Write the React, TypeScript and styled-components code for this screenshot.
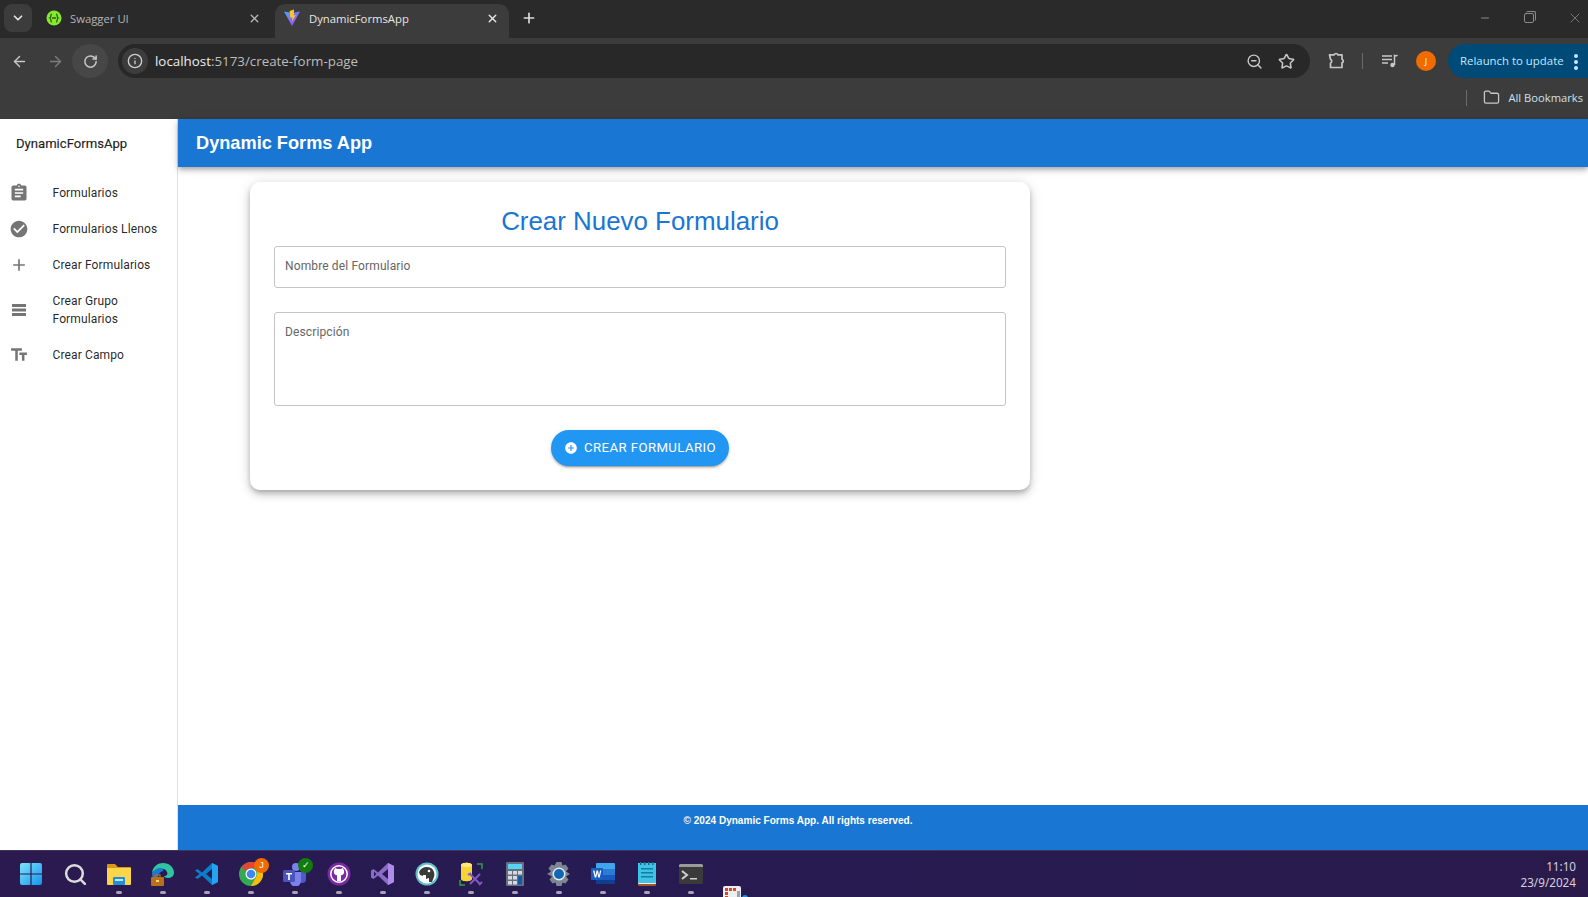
import React from "react";
import styled, { createGlobalStyle } from "styled-components";
import { ArrowLeft, ArrowRight, RotateCw, Info, ZoomOut, Star, Folder, X, Plus, ChevronDown, Minus, Search } from "lucide-react";
import { MdAssignment, MdCheckCircle, MdAdd, MdTextFields, MdAddCircle } from "react-icons/md";

const Global = createGlobalStyle`
  html, body { margin: 0; padding: 0; height: 100%; overflow: hidden; background: #fff; }
  * { box-sizing: border-box; }
  #root { height: 897px; width: 1588px; display: flex; flex-direction: column; font-family: Roboto, "Liberation Sans", sans-serif; }
`;

const Browser = styled.header`
  height: 119px; flex: none; background: #3c3c3c; display: flex; flex-direction: column;
  font-family: "Open Sans", "Noto Sans", sans-serif; color: #e3e3e3;
`;
const TabStrip = styled.div`
  height: 38px; background: #2a2a2a; display: flex; align-items: flex-start; padding: 4px 0 0 4px; position: relative;
`;
const TabSearch = styled.div`
  width: 28px; height: 28px; border-radius: 8px; background: #3c3c3c; display: flex; align-items: center; justify-content: center; margin-right: 6px;
`;
const Tab = styled.div<{ $active?: boolean }>`
  width: ${(p) => (p.$active ? 234 : 237)}px; height: 34px; display: flex; align-items: center; padding: 0 ${(p) => (p.$active ? 10 : 14)}px 6px 8px; border-radius: 10px 10px 0 0;
  background: ${(p) => (p.$active ? "#3c3c3c" : "transparent")};
  color: ${(p) => (p.$active ? "#e6e6e6" : "#b5b5b5")};
  font-size: 11.3px; gap: 8px;
`;
const TabTitle = styled.span`flex: 1;`;
const NewTab = styled.div`width: 39px; height: 28px; display: flex; align-items: center; justify-content: center; color: #dcdcdc;`;
const WindowButtons = styled.div`
  margin-left: auto; display: flex; height: 28px; align-items: center; padding-right: 5px; gap: 32px; color: #8a8a8a;
`;
const Restore = styled.div`
  width: 10px; height: 10px; border: 1px solid #8a8a8a; border-radius: 2px; position: relative; margin: 0 1px;
  &::after { content: ""; position: absolute; top: -3px; right: -3px; width: 9px; height: 9px; border-top: 1px solid #8a8a8a; border-right: 1px solid #8a8a8a; border-radius: 2px; }
`;
const Toolbar = styled.div`height: 44px; display: flex; align-items: center; padding: 2px 0 0 0;`;
const NavButton = styled.div<{ $w: number; $circle?: boolean; $dim?: boolean }>`
  width: ${(p) => p.$w}px; height: 34px; display: flex; align-items: center; justify-content: center; flex: none;
  border-radius: 50%; background: ${(p) => (p.$circle ? "#474747" : "transparent")};
  color: ${(p) => (p.$dim ? "#7c7c7c" : "#c7c7c7")};
`;
const Omnibox = styled.div`
  width: 1192px; height: 34px; border-radius: 17px; background: #282828; margin-left: 10px; display: flex; align-items: center; padding: 0 15px 0 4px; flex: none;
`;
const InfoChip = styled.div`width: 26px; height: 26px; border-radius: 50%; background: #3c3c3c; display: flex; align-items: center; justify-content: center; color: #d0d0d0; margin-right: 7px;`;
const Url = styled.span`font-size: 13.35px; color: #bdbdbd; flex: 1; b { font-weight: 400; color: #ededed; }`;
const OmniIcons = styled.div`display: flex; gap: 15px; color: #c7c7c7; align-items: center;`;
const ToolIcons = styled.div`display: flex; align-items: center; color: #c7c7c7; margin-left: 17px; flex: 1;`;
const ToolSlot = styled.span<{ $gap: number }>`display: flex; margin-left: ${(p) => p.$gap}px;`;
const VSep = styled.div<{ $gap?: number }>`width: 1px; height: 16px; background: #6a6a6a; flex: none; margin-left: ${(p) => p.$gap ?? 0}px;`;
const Avatar = styled.div`
  width: 20px; height: 20px; border-radius: 50%; background: #f06c00; color: #fff; font-size: 9px; display: flex; align-items: center; justify-content: center; flex: none;
`;
const Relaunch = styled.div`
  margin-left: auto; width: 140px; height: 34px; background: #004a77; color: #c2e7ff; border-radius: 17px 0 0 17px; display: flex; align-items: center; padding: 0 0 2px 12px; font-size: 11.4px; position: relative; white-space: nowrap;
`;
const Dots = styled.span`
  position: absolute; right: 10px; top: 10px; width: 4px; height: 4px; background: #c2e7ff; border-radius: 50%; box-shadow: 0 6px 0 #c2e7ff, 0 12px 0 #c2e7ff;
`;
const BookmarkBar = styled.div`
  height: 37px; display: flex; align-items: center; justify-content: flex-end; padding: 0 5px 6px 0; font-size: 11.2px; color: #cfe0ea;
`;
const BookmarkFolder = styled.span`display: flex; color: #c7c7c7; margin: 0 8px 0 16px;`;

const Page = styled.div`flex: 1; min-height: 0; display: flex;`;
const Sidebar = styled.aside`width: 178px; flex: none; border-right: 1px solid #e0e0e0; background: #fff; display: flex; flex-direction: column;`;
const Brand = styled.div`height: 48px; padding: 1px 0 0 16px; display: flex; align-items: center; font-size: 13.1px; font-weight: 400; -webkit-text-stroke: .2px rgba(0,0,0,.87); color: rgba(0,0,0,.87);`;
const NavList = styled.nav`padding-top: 8px; display: flex; flex-direction: column;`;
const NavItem = styled.div`display: flex; align-items: center; padding: 9px 14px 9px 9px; font-size: 12px; line-height: 18px; color: rgba(0,0,0,.87); letter-spacing: .13px;`;
const NavIcon = styled.span`width: 43.5px; height: 18px; flex: none; display: flex; align-items: center; color: #757575;`;

const Main = styled.div`flex: 1; min-width: 0; display: flex; flex-direction: column;`;
const AppBar = styled.div`
  height: 48px; flex: none; background: #1976d2; color: #fff; display: flex; align-items: center; padding-left: 18px;
  font: bold 18.2px "Liberation Sans", sans-serif; box-shadow: 0 2px 4px -1px rgba(0,0,0,.2), 0 4px 5px rgba(0,0,0,.14), 0 1px 10px rgba(0,0,0,.12); position: relative; z-index: 1;
`;
const Content = styled.main`flex: 1; padding: 15px 0 0 72px;`;
const Card = styled.section`
  width: 780px; height: 308px; background: #fff; border-radius: 10px; padding: 22px 24px 20px; display: flex; flex-direction: column;
  box-shadow: 0 3px 5px -1px rgba(0,0,0,.2), 0 5px 8px rgba(0,0,0,.14), 0 1px 14px rgba(0,0,0,.12);
`;
const Title = styled.h1`margin: 0 0 8px; height: 34px; font: 400 25.9px/34px "Liberation Sans", sans-serif; color: #1976d2; text-align: center;`;
const Field = styled.input`
  height: 42px; border: 1px solid #c4c4c4; border-radius: 3px; padding: 0 10px 2px; font: 12px Roboto, sans-serif; letter-spacing: .13px; margin-bottom: 24px; outline: none;
  &::placeholder { color: #666; opacity: 1; }
`;
const Area = styled.textarea`
  height: 94px; border: 1px solid #c4c4c4; border-radius: 3px; padding: 12px 10px; font: 12px/15px Roboto, sans-serif; letter-spacing: .13px; margin-bottom: 24px; outline: none; resize: none;
  &::placeholder { color: #666; opacity: 1; }
`;
const Submit = styled.button`
  align-self: center; width: 178px; height: 36px; border: 0; border-radius: 18px; background: #2196f3; color: #fff; display: flex; align-items: center; justify-content: center; gap: 6px; padding: 0 0 1px;
  font: 400 13.2px Roboto, sans-serif; letter-spacing: .42px; text-transform: uppercase; box-shadow: 0 3px 1px -2px rgba(0,0,0,.2), 0 2px 2px rgba(0,0,0,.14), 0 1px 5px rgba(0,0,0,.12);
`;
const Footer = styled.footer`
  height: 45px; flex: none; background: #1976d2; color: #fff; font: bold 10.05px "Liberation Sans", sans-serif; text-align: center; padding: 9px 170px 0 0; line-height: 14px;
`;

const Taskbar = styled.div`
  height: 47px; flex: none; background: linear-gradient(90deg, #2b1a50, #261b52 35%, #2a1a4c); border-top: 1px solid #3d3460; display: flex; align-items: flex-start; padding-left: 9px; position: relative; overflow: hidden;
`;
const Slot = styled.div<{ $dot?: boolean }>`
  width: 44px; height: 46px; display: flex; justify-content: center; padding-top: 11px; position: relative; flex: none;
  ${(p) => p.$dot ? `&::after { content: ""; position: absolute; left: 19px; bottom: 3px; width: 6px; height: 3px; border-radius: 2px; background: #a7a3b5; }` : ""}
`;
const Overflow = styled.div`position: absolute; left: 722px; top: 34px; display: flex;`;
const Clock = styled.div`
  position: absolute; right: 12px; top: 7px; color: #d5d0de; font: 11.7px/16px "Noto Sans", sans-serif; text-align: right;
`;
const Badge = styled.span<{ $bg: string }>`
  position: absolute; top: 7px; right: 4px; width: 15px; height: 15px; border-radius: 50%; background: ${(p) => p.$bg}; color: #fff; font-size: 9px; line-height: 15px; text-align: center; font-family: "Liberation Sans", sans-serif;
`;

const SwaggerIcon = () => (
  <svg width="16" height="16" viewBox="0 0 16 16"><circle cx="8" cy="8" r="7.500" fill="#85ea2d" /><path d="M5.800 3.800C4 4.500 5.800 7 3.800 8c2 1 .2 3.500 2 4.200M10.200 3.800C12 4.500 10.200 7 12.200 8c-2 1-.2 3.500-2 4.200M6 8h4" stroke="#2c5c12" strokeWidth="1.300" fill="none" /></svg>
);
const ViteIcon = () => (
  <svg width="18" height="18" viewBox="0 0 18 18"><defs><linearGradient id="v" x1="0" y1="0" x2="1" y2="1"><stop offset="0" stopColor="#41a8ff" /><stop offset="1" stopColor="#bd34fe" /></linearGradient></defs><path d="M1 2.500 9 4l8-1.500L9 17z" fill="url(#v)" /><path d="M11 .5 6.500 2l1 7 2-.8-.4 4.300L12.800 6l-2 .5z" fill="#ffc61f" /></svg>
);
const BarsIcon = () => (
  <svg width="20" height="20" viewBox="0 0 20 20" fill="currentColor"><path d="M3 4h14v3H3zM3 8.500h14v3H3zM3 13h14v3H3z" /></svg>
);
const ExtensionIcon = () => (
  <svg width="18" height="18" viewBox="0 0 18 18" fill="none" stroke="currentColor" strokeWidth="1.700" strokeLinejoin="round"><path d="M2.500 2.800H7.200a1.900 1.900 0 0 1 3.600 0H15v4.400a1.900 1.900 0 0 1 0 3.600V15.500H3.500v-4.300a2.200 2.200 0 0 0 0-3.900z" /></svg>
);
const MediaIcon = () => (
  <svg width="18" height="18" viewBox="0 0 18 18" fill="none" stroke="currentColor" strokeWidth="1.500"><path d="M1 4h10M1 7.500h10M1 11h6" /><path d="M13.500 13V3.500c1 .6 2 .4 3-.4" /><circle cx="11.500" cy="13" r="2.200" fill="currentColor" stroke="none" /></svg>
);

const Win = () => (
  <svg width="24" height="24" viewBox="0 0 24 24"><defs><linearGradient id="w" x1="0" y1="0" x2="1" y2="1"><stop offset="0" stopColor="#7fe3fb" /><stop offset="1" stopColor="#1493ee" /></linearGradient></defs><path d="M1 3a2 2 0 0 1 2-2h8.400v10.400H1zM12.600 1H21a2 2 0 0 1 2 2v8.400H12.600zM1 12.600h10.400V23H3a2 2 0 0 1-2-2zM12.600 12.600H23V21a2 2 0 0 1-2 2h-8.400z" fill="url(#w)" /></svg>
);
const FilesIcon = () => (
  <svg width="24" height="24" viewBox="0 0 24 24"><path d="M0 3a1 1 0 0 1 1-1h7l3 3h12a1 1 0 0 1 1 1v3H0z" fill="#d99a13" /><path d="M0 6h24v16a1 1 0 0 1-1 1H1a1 1 0 0 1-1-1z" fill="#fcd54a" /><rect x="6" y="15" width="12" height="8" fill="#1f8fd8" rx="1" /><rect x="8" y="17" width="8" height="2" fill="#bfe6fb" /></svg>
);
const EdgeIcon = () => (
  <svg width="24" height="24" viewBox="0 0 24 24"><path d="M1 11C2 4 7 1 12 1c6 0 11 4 11 10 0 3-3 5-6 5-2 0-4-1-4-2 3 0 4-2 3-4-1-3-4-4-7-3-3 0-6 2-8 4z" fill="#2fc5a0" /><path d="M1 11c2-3 5-5 8-5 3 0 4 2 3 3-3 1-5 3-5 7 0 2 1 5 4 7C5 23 1 18 1 11z" fill="#1a78d6" /><rect x="0" y="15" width="13" height="9" rx="1" fill="#b8701a" /><rect x="4" y="13" width="5" height="3" fill="none" stroke="#b8701a" strokeWidth="1.200" /><rect x="5" y="18" width="3" height="2" fill="#ffd27a" /></svg>
);
const VSCodeIcon = () => (
  <svg width="24" height="24" viewBox="0 0 24 24"><path d="M17 1 23 4v16l-6 3L7 13.500 2.500 17 0 15.500 4.500 12 0 8.500 2.500 7 7 10.500z" fill="#0a7ecb" /><path d="M17 1 23 4v16l-6 3z" fill="#25a4ee" /><path d="M17 7v10l-6-5z" fill="#261b52" /></svg>
);
const ChromeIcon = () => (
  <svg width="24" height="24" viewBox="0 0 24 24"><circle cx="12" cy="12" r="12" fill="#34a853" /><path d="M12 0a12 12 0 0 1 10.400 6H12a6 6 0 0 0-5.200 3L2.600 5.400A12 12 0 0 1 12 0z" fill="#ea4335" /><path d="M22.400 6A12 12 0 0 1 12 24l5.200-9A6 6 0 0 0 17 8z" fill="#fbbc04" /><circle cx="12" cy="12" r="5.500" fill="#fff" /><circle cx="12" cy="12" r="4.300" fill="#4285f4" /></svg>
);
const TeamsIcon = () => (
  <svg width="24" height="24" viewBox="0 0 24 24"><circle cx="13" cy="5" r="4" fill="#7b83eb" /><circle cx="20" cy="7" r="3" fill="#5059c9" /><path d="M15 10h8v7a4 4 0 0 1-8 0z" fill="#5059c9" /><path d="M7 10h11v9a5 5 0 0 1-11 0z" fill="#7b83eb" /><rect x="0" y="8" width="12" height="12" rx="1.500" fill="#4b53bc" /><path d="M3 11h6v1.500H6.800V18H5.200v-5.500H3z" fill="#fff" /></svg>
);
const GithubIcon = () => (
  <svg width="24" height="24" viewBox="0 0 24 24"><circle cx="12" cy="12" r="11.500" fill="#7b2aa5" /><circle cx="12" cy="12" r="8.200" fill="none" stroke="#fff" strokeWidth="1.500" /><path d="M7.500 7.500 8 6l2.500 1h3L16 6l.5 1.500c1 1.500 1 4-.5 5-1 .7-2 .8-2.200.8l.2 1V19h-4v-4.700l.2-1c-.2 0-1.200-.1-2.200-.8-1.500-1-1.500-3.500-.5-5z" fill="#fff" /></svg>
);
const VSIcon = () => (
  <svg width="24" height="24" viewBox="0 0 24 24"><path d="M17 1 23 4v16l-6 3L7 13.500 2.500 17 0 15.500v-7L2.500 7 7 10.500z" fill="#8a6cc6" /><path d="M17 1 23 4v16l-6 3z" fill="#b18be8" /><path d="M17 7v10l-6-5z" fill="#261b52" /><path d="M3 9.500v5l2.500-2.500z" fill="#261b52" /></svg>
);
const DBeaverIcon = () => (
  <svg width="24" height="24" viewBox="0 0 24 24"><circle cx="12" cy="12" r="11.500" fill="#5fbfc4" /><circle cx="12" cy="12" r="9.500" fill="#fff" /><path d="M4 10c2-5 8-6 12-4 3 2 4 6 3 9l-2 5h-3v-4l-3 1-3-3-3-1z" fill="#3a3a3a" /><circle cx="14" cy="9" r="1.300" fill="#fff" /><rect x="8" y="13" width="3" height="4" fill="#fff" /></svg>
);
const SqlToolIcon = () => (
  <svg width="24" height="24" viewBox="0 0 24 24"><path d="M2 3c0-3 11-3 11 0v14c0 3-11 3-11 0z" fill="#f6d437" /><ellipse cx="7.500" cy="3" rx="5.500" ry="2.200" fill="#ffe97a" /><path d="M18 2h5v5M1 18v5h5" fill="none" stroke="#2f9e44" strokeWidth="1.500" /><path d="M11 12l10 10M21 12 11 22M9 13l3-2M23 20l-3 3" stroke="#8456c8" strokeWidth="2" /></svg>
);
const CalcIcon = () => (
  <svg width="24" height="24" viewBox="0 0 24 24"><rect x="3" y="0" width="18" height="24" rx="1" fill="#66707e" /><rect x="5" y="2" width="14" height="5" fill="#57d4f2" /><path d="M5 9h4v3.500H5zM10 9h4v3.500h-4zM5 14h4v3.500H5zM10 14h4v3.500h-4zM5 19h4v3.500H5zM10 19h4v3.500h-4z" fill="#d6dae0" /><rect x="15" y="14" width="4" height="8.500" fill="#0e5aa6" /><rect x="15" y="9" width="4" height="3.500" fill="#d6dae0" /></svg>
);
const GearIcon = () => (
  <svg width="24" height="24" viewBox="0 0 24 24"><path d="M9.500 0h5l1 3.500 3-1 3 4-2.500 3 4 2.500-4 2.500 2.500 3-3 4-3-1-1 3.500h-5l-1-3.500-3 1-3-4 2.500-3L0 12l4-2.500-2.500-3 3-4 3 1z" fill="#7d8794" /><circle cx="12" cy="12" r="6.500" fill="#e7eaee" /><circle cx="12" cy="12" r="5" fill="#0f67b5" /></svg>
);
const WordIcon = () => (
  <svg width="24" height="24" viewBox="0 0 24 24"><path d="M6 1h17a1 1 0 0 1 1 1v5H5V2a1 1 0 0 1 1-1z" fill="#41a5ee" /><rect x="5" y="7" width="19" height="6" fill="#2b7cd3" /><rect x="5" y="13" width="19" height="5" fill="#185abd" /><path d="M5 18h19v3a1 1 0 0 1-1 1H6a1 1 0 0 1-1-1z" fill="#103f91" /><rect x="0" y="6" width="12" height="12" rx="1" fill="#1a5cc0" /><path d="M2 8.500h1.500l1 5 1-5H7l1 5 1-5h1.300L8.700 15.500H7.300l-1-4.500-1 4.500H3.800z" fill="#fff" /></svg>
);
const NotepadIcon = () => (
  <svg width="24" height="24" viewBox="0 0 24 24"><rect x="3" y="1" width="18" height="23" rx="1" fill="#a5512b" /><rect x="3" y="1" width="18" height="21" rx="1" fill="#f4efe5" /><rect x="3" y="1" width="18" height="20" rx="1" fill="#3fc2e6" /><path d="M6 6h12v1.500H6zM6 10h12v1.500H6zM6 14h12v1.500H6z" fill="#137fa0" /><path d="M5 0h1.500v3H5zM9 0h1.500v3H9zM13 0h1.500v3H13zM17 0h1.500v3H17z" fill="#1c6f8c" /></svg>
);
const TerminalIcon = () => (
  <svg width="24" height="24" viewBox="0 0 24 24"><rect x="0" y="2" width="24" height="20" rx="1.500" fill="#3a3a3a" /><path d="M0 3.500A1.500 1.500 0 0 1 1.500 2h21A1.500 1.500 0 0 1 24 3.500V5H0z" fill="#9a9a9a" /><path d="M3 9l5 4-5 4" fill="none" stroke="#d0d0d0" strokeWidth="2" /><rect x="11" y="16" width="7" height="1.500" fill="#d0d0d0" /></svg>
);
const SnippetIcon = () => (
  <svg width="26" height="14" viewBox="0 0 26 14"><rect x="1" y="1" width="18" height="18" rx="2" fill="#eceff1" /><path d="M3 3h3v3H3zM7 3h3v3H7zM11 3h3v3h-3zM3 7h3v3H3zM3 11h3v3H3z" fill="#d9481c" /><rect x="15" y="6" width="3" height="8" fill="#9aa3ab" /><circle cx="23" cy="13" r="3" fill="#1f8fd8" /></svg>
);

export default function App() {
  return (
    <>
      <Global />
      <Browser>
        <TabStrip>
          <TabSearch><ChevronDown size={14} strokeWidth={3} /></TabSearch>
          <Tab><SwaggerIcon /><TabTitle>Swagger UI</TabTitle><X size={13} strokeWidth={2.5} /></Tab>
          <Tab $active><ViteIcon /><TabTitle>DynamicFormsApp</TabTitle><X size={13} strokeWidth={2.5} /></Tab>
          <NewTab><Plus size={16} strokeWidth={2.5} /></NewTab>
          <WindowButtons>
            <Minus size={12} />
            <Restore />
            <X size={16} strokeWidth={1.2} />
          </WindowButtons>
        </TabStrip>
        <Toolbar>
          <NavButton $w={38}><ArrowLeft size={17} /></NavButton>
          <NavButton $w={34} $dim><ArrowRight size={17} /></NavButton>
          <NavButton $w={36} $circle><RotateCw size={15} strokeWidth={2.4} /></NavButton>
          <Omnibox>
            <InfoChip><Info size={16} /></InfoChip>
            <Url><b>localhost</b>:5173/create-form-page</Url>
            <OmniIcons><ZoomOut size={17} /><Star size={17} strokeWidth={2.2} /></OmniIcons>
          </Omnibox>
          <ToolIcons>
            <ExtensionIcon />
            <VSep $gap={17} />
            <ToolSlot $gap={18}><MediaIcon /></ToolSlot>
            <ToolSlot $gap={17}><Avatar>J</Avatar></ToolSlot>
            <Relaunch>Relaunch to update<Dots /></Relaunch>
          </ToolIcons>
        </Toolbar>
        <BookmarkBar>
          <VSep />
          <BookmarkFolder><Folder size={17} strokeWidth={1.8} /></BookmarkFolder>
          All Bookmarks
        </BookmarkBar>
      </Browser>
      <Page>
        <Sidebar>
          <Brand>DynamicFormsApp</Brand>
          <NavList>
            <NavItem><NavIcon><MdAssignment size={20} /></NavIcon>Formularios</NavItem>
            <NavItem><NavIcon><MdCheckCircle size={20} /></NavIcon>Formularios Llenos</NavItem>
            <NavItem><NavIcon><MdAdd size={20} /></NavIcon>Crear Formularios</NavItem>
            <NavItem><NavIcon><BarsIcon /></NavIcon>Crear Grupo Formularios</NavItem>
            <NavItem><NavIcon><MdTextFields size={20} /></NavIcon>Crear Campo</NavItem>
          </NavList>
        </Sidebar>
        <Main>
          <AppBar>Dynamic Forms App</AppBar>
          <Content>
            <Card>
              <Title>Crear Nuevo Formulario</Title>
              <Field placeholder="Nombre del Formulario" />
              <Area placeholder="Descripción" />
              <Submit><MdAddCircle size={14} />Crear Formulario</Submit>
            </Card>
          </Content>
          <Footer>© 2024 Dynamic Forms App. All rights reserved.</Footer>
        </Main>
      </Page>
      <Taskbar>
        <Slot><Win /></Slot>
        <Slot><Search size={25} color="#dcdcdc" strokeWidth={2.4} /></Slot>
        <Slot $dot><FilesIcon /></Slot>
        <Slot $dot><EdgeIcon /></Slot>
        <Slot $dot><VSCodeIcon /></Slot>
        <Slot $dot><ChromeIcon /><Badge $bg="#ef6c00">J</Badge></Slot>
        <Slot $dot><TeamsIcon /><Badge $bg="#107c10">✓</Badge></Slot>
        <Slot $dot><GithubIcon /></Slot>
        <Slot $dot><VSIcon /></Slot>
        <Slot $dot><DBeaverIcon /></Slot>
        <Slot $dot><SqlToolIcon /></Slot>
        <Slot $dot><CalcIcon /></Slot>
        <Slot $dot><GearIcon /></Slot>
        <Slot $dot><WordIcon /></Slot>
        <Slot $dot><NotepadIcon /></Slot>
        <Slot $dot><TerminalIcon /></Slot>
        <Overflow><SnippetIcon /></Overflow>
        <Clock>11:10<br />23/9/2024</Clock>
      </Taskbar>
    </>
  );
}
